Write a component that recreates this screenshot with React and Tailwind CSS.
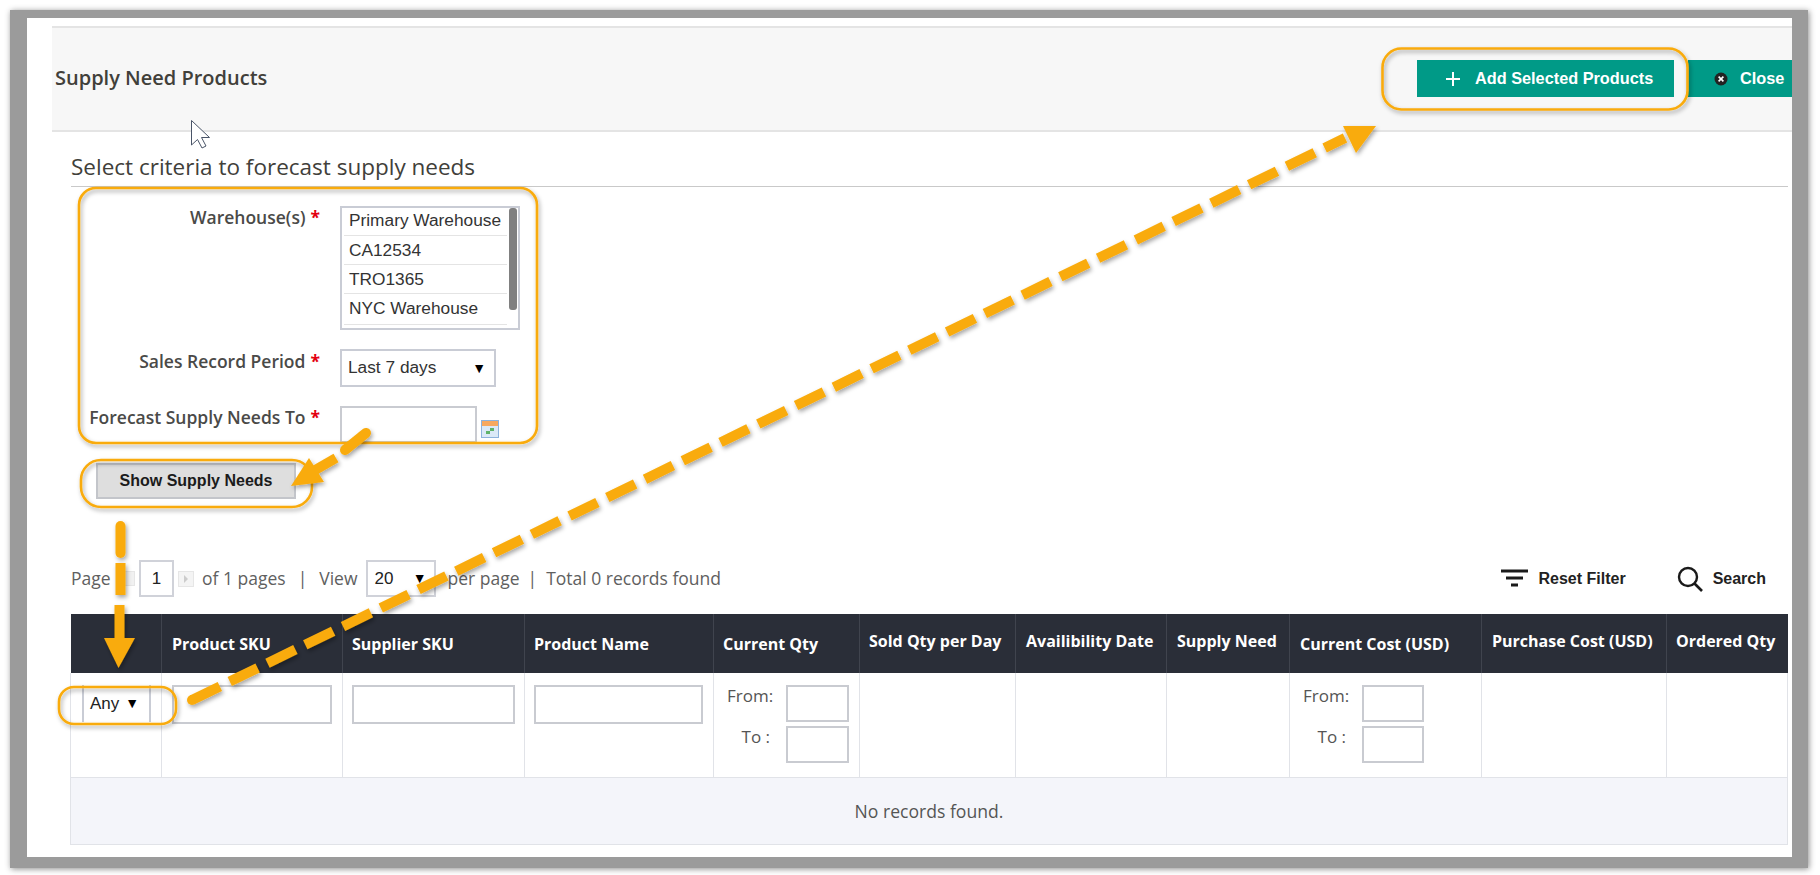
const Star = () => <span className="text-[#e3000f] font-bold ml-[5px]">*</span>;

function Annotations() {
  const orange = "#f9ab0b";
  return (
    <svg className="absolute inset-0 pointer-events-none" width="1820" height="875" aria-hidden="true">
      <defs>
        <filter id="sh" x="-5%" y="-5%" width="110%" height="110%">
          <feDropShadow dx="1.5" dy="2.5" stdDeviation="2" floodColor="#000" floodOpacity="0.35" />
        </filter>
      </defs>
      <g filter="url(#sh)" fill="none" stroke={orange} strokeWidth="2.6">
        <rect x="79" y="188" width="458" height="255" rx="17" />
        <rect x="81" y="460" width="231" height="47" rx="20" />
        <rect x="59" y="687" width="117" height="37" rx="15" />
        <rect x="1382.5" y="48.5" width="305" height="61" rx="19" />
      </g>
      <g filter="url(#sh)">
        <line x1="192" y1="700" x2="1345" y2="138" stroke={orange} strokeWidth="10" strokeDasharray="31 11" />
        <circle cx="192" cy="700" r="5" fill={orange} />
        <polygon points="1343,126 1376,126 1356,153" fill={orange} />

        <line x1="366" y1="433" x2="345" y2="450" stroke={orange} strokeWidth="10" strokeLinecap="round" />
        <line x1="336" y1="458" x2="310" y2="473" stroke={orange} strokeWidth="10" />
        <polygon points="291,486 309,458 324,482" fill={orange} />

        <line x1="120.5" y1="526" x2="120.5" y2="553" stroke={orange} strokeWidth="10" strokeLinecap="round" />
        <line x1="120.5" y1="563" x2="120.5" y2="595" stroke={orange} strokeWidth="10" />
        <line x1="119.5" y1="605" x2="119.5" y2="638" stroke={orange} strokeWidth="10" />
        <polygon points="104,638 135,638 118.5,668" fill={orange} />
      </g>
      <path d="M191.5 120.5 L191.5 145 L197.5 139.5 L202 148 L206 146 L201.5 137.5 L209.5 137.5 Z" fill="#fff" stroke="#4a5568" strokeWidth="1" />
    </svg>
  );
}

const inputCls = "block bg-white border-2 border-[#c9cbd1]";

function RangeFilter({ inputW }) {
  return (
    <div className="pl-[13px] pt-[12px] flex flex-col gap-[4px] text-[17px] text-[#555]">
      <div className="flex">
        <span className="w-[45px] text-right leading-[22px] whitespace-nowrap">From:</span>
        <span className={`${inputCls} ml-[14px] h-[37px] ${inputW}`} />
      </div>
      <div className="flex">
        <span className="w-[43px] text-right leading-[22px] whitespace-nowrap">To :</span>
        <span className={`${inputCls} ml-[16px] h-[37px] ${inputW}`} />
      </div>
    </div>
  );
}

const heads = [
  ["", "w-[91px] pl-[10px]"],
  ["Product SKU", "w-[181px] pl-[10px]"],
  ["Supplier SKU", "w-[182px] pl-[9px]"],
  ["Product Name", "w-[189px] pl-[9px]"],
  ["Current Qty", "w-[146px] pl-[9px]"],
  ["Sold Qty per Day", "w-[156px] pl-[9px] pb-[6px]"],
  ["Availibility Date", "w-[151px] pl-[10px] pb-[6px]"],
  ["Supply Need", "w-[123px] pl-[10px] pb-[6px]"],
  ["Current Cost (USD)", "w-[192px] pl-[10px]"],
  ["Purchase Cost (USD)", "w-[185px] pl-[10px] pb-[6px]"],
  ["Ordered Qty", "w-[121px] pl-[9px] pb-[6px]"],
];

export default function App() {
  return (
    <div className="relative w-[1820px] h-[875px] overflow-hidden bg-white font-['Open_Sans','Noto_Sans',sans-serif]">
      <div className="ml-[10px] mt-[10px] w-[1798px] h-[858px] border-l-[17px] border-r-[16px] border-t-[8px] border-b-[11px] border-[#9b9b9b] bg-white overflow-hidden shadow-[1px_1px_6px_rgba(0,0,0,0.45)]">
        {/* title bar */}
        <div className="mt-[8px] ml-[25px] h-[106px] bg-[#f7f7f7] border-y-2 border-[#e4e4e4] flex items-center pl-[3px]">
          <h1 className="text-[20px] font-semibold text-[#41403a] -mt-[2px]">Supply Need Products</h1>
          <div className="ml-auto flex -mt-[1px] font-['Liberation_Sans',sans-serif] font-bold text-white text-[16.3px]">
            <button className="w-[257px] h-[37px] bg-[#009a87] flex items-center pl-[28px]">
              <svg width="16" height="16" viewBox="0 0 16 16" className="mr-[14px]"><path d="M8 1v14M1 8h14" stroke="#fff" strokeWidth="2" /></svg>
              Add Selected Products
            </button>
            <button className="ml-[14px] w-[104px] h-[37px] bg-[#009a87] flex items-center pl-[26px]">
              <svg width="14" height="14" viewBox="0 0 14 14" className="mr-[12px]">
                <circle cx="7" cy="7" r="6.5" fill="#222" />
                <path d="M4.6 4.6l4.8 4.8M9.4 4.6L4.6 9.4" stroke="#fff" strokeWidth="1.6" />
              </svg>
              Close
            </button>
          </div>
        </div>

        <div className="pl-[44px] pr-[4px]">
          <h2 className="h-[55px] pt-[16px] leading-[38px] text-[22.5px] text-[#41403a] border-b border-[#c9c9c9]">Select criteria to forecast supply needs</h2>

          {/* form */}
          <div className="mt-[19px] grid grid-cols-[269px_auto] gap-y-[19px] gap-x-0 w-fit text-[17.5px] font-semibold text-[#4a4a48]">
            <label className="text-right pr-[20px] leading-[22px]">Warehouse(s)<Star /></label>
            <div className="w-[180px] h-[124px] border-2 border-[#c9ccd5] flex font-['Liberation_Sans',sans-serif] font-normal text-[17.3px] text-[#333] ">
              <div className="flex-1 pl-[2px] pr-[2px]">
                {["Primary Warehouse", "CA12534", "TRO1365", "NYC Warehouse"].map((w) => (
                  <div key={w} className="h-[29px] leading-[29px] pl-[5px] border-b border-[#e4e4e4] whitespace-nowrap first:h-[28px] first:leading-[24px] last:h-[31px]">{w}</div>
                ))}
              </div>
              <div className="w-[8px] h-[102px] bg-[#808080] rounded-[3px] mr-[1px]" />
            </div>

            <label className="text-right pr-[20px] leading-[22px] pt-[1px]">Sales Record Period<Star /></label>
            <div className="w-[156px] h-[38px] border-2 border-[#c9ccd5] flex items-center justify-between pl-[6px] pr-[8px] font-['Liberation_Sans',sans-serif] font-normal text-[17.3px] text-[#333]">
              Last 7 days<span className="text-[14px] text-black">▼</span>
            </div>

            <label className="text-right pr-[20px] leading-[22px] whitespace-nowrap">Forecast Supply Needs To<Star /></label>
            <div className="flex items-center">
              <span className={`${inputCls} w-[137px] h-[37px]`} />
              <svg width="18" height="18" viewBox="0 0 18 18" className="ml-[4px] mt-[9px]">
                <rect x="0.5" y="0.5" width="17" height="17" fill="#dbe9f7" stroke="#8db2dc" />
                <rect x="1" y="1" width="16" height="5" fill="#f7a85e" />
                <rect x="9" y="8" width="4" height="3" fill="#5fb36a" />
                <rect x="5" y="11" width="4" height="3" fill="#5fb36a" />
              </svg>
            </div>
          </div>

          <button className="mt-[20px] ml-[25px] block w-[200px] h-[36px] bg-[#dedede] border-2 border-[#c3c5ca] font-['Liberation_Sans',sans-serif] font-bold text-[16px] text-[#1b1b1b]">Show Supply Needs</button>

          {/* pager */}
          <div className="mt-[61px] h-[37px] flex items-center text-[17.5px] text-[#606060] pr-[22px]">
            <span className="w-[40px]">Page</span>
            <span className="ml-[12px] w-[12px] h-[15px] bg-[#f1f1f1] border border-[#e6e6e6]" />
            <span className="ml-[4px] w-[35px] h-[37px] border-2 border-[#d0d2d9] flex items-center justify-center font-['Liberation_Sans',sans-serif] text-[17px] text-[#222]">1</span>
            <span className="ml-[4px] w-[16px] h-[16px] bg-[#f4f4f4] border border-[#e6e6e6] flex items-center justify-center">
              <svg width="6" height="8" viewBox="0 0 6 8"><path d="M1 0l4 4-4 4z" fill="#ccc" /></svg>
            </span>
            <span className="ml-[8px]">of 1 pages</span>
            <span className="ml-[12px]">|</span>
            <span className="ml-[12px]">View</span>
            <span className="ml-[8px] w-[70px] h-[37px] border-2 border-[#d0d2d9] flex items-center justify-between pl-[7px] pr-[7px] font-['Liberation_Sans',sans-serif] text-[17px] text-[#222]">20<span className="text-[14px] text-black">▼</span></span>
            <span className="ml-[12px]">per page</span>
            <span className="ml-[8px]">|</span>
            <span className="ml-[9px]">Total 0 records found</span>
            <div className="ml-auto flex items-center font-['Liberation_Sans',sans-serif] font-bold text-[16px] text-[#222]">
              <svg width="28" height="19" viewBox="0 0 28 19" className="mr-[9px]">
                <path d="M0 2h27M5 9h17M10 16h7" stroke="#1a1a1a" strokeWidth="3" />
              </svg>
              <span>Reset Filter</span>
              <svg width="26" height="26" viewBox="0 0 26 26" className="ml-[51px] mr-[10px]">
                <circle cx="11" cy="11" r="9" fill="none" stroke="#1a1a1a" strokeWidth="2.4" />
                <path d="M17.5 17.5L25 25" stroke="#1a1a1a" strokeWidth="2.6" />
              </svg>
              <span>Search</span>
            </div>
          </div>

          {/* grid */}
          <table className="mt-[17px] -ml-[1px] w-[1717px] table-fixed border-collapse">
            <thead>
              <tr className="h-[59px] bg-[#2a2e38] text-white text-[16px] font-bold">
                {heads.map(([t, w], i) => (
                  <th key={i} className={`${w} text-left border-l border-[#40444e] first:border-l-0 whitespace-nowrap`}>{t}</th>
                ))}
              </tr>
            </thead>
            <tbody>
              <tr className="h-[104px] align-top">
                <td className="border-x border-[#e1e3e8]">
                  <div className="relative ml-[11px] mt-[12px] w-[69px] h-[37px] border-x-2 border-[#c9ccd5] flex items-center justify-between pl-[6px] pr-[10px] font-['Liberation_Sans',sans-serif] text-[17px] text-[#222]">
                    Any<span className="text-[14px] text-black">▼</span>
                  </div>
                </td>
                <td className="border-x border-[#e1e3e8]"><div className={`${inputCls} ml-[10px] mt-[12px] w-[160px] h-[39px]`} /></td>
                <td className="border-x border-[#e1e3e8]"><div className={`${inputCls} ml-[9px] mt-[12px] w-[163px] h-[39px]`} /></td>
                <td className="border-x border-[#e1e3e8]"><div className={`${inputCls} ml-[9px] mt-[12px] w-[169px] h-[39px]`} /></td>
                <td className="border-x border-[#e1e3e8]"><RangeFilter inputW="w-[63px]" /></td>
                <td className="border-x border-[#e1e3e8]" />
                <td className="border-x border-[#e1e3e8]" />
                <td className="border-x border-[#e1e3e8]" />
                <td className="border-x border-[#e1e3e8]"><RangeFilter inputW="w-[62px]" /></td>
                <td className="border-x border-[#e1e3e8]" />
                <td className="border-x border-[#e1e3e8]" />
              </tr>
              <tr className="h-[67px] bg-[#f4f5fa]">
                <td colSpan={11} className="text-center pt-[2px] text-[17.6px] text-[#555] border border-[#e1e3e8]">No records found.</td>
              </tr>
            </tbody>
          </table>
        </div>
      </div>
      <Annotations />
    </div>
  );
}
